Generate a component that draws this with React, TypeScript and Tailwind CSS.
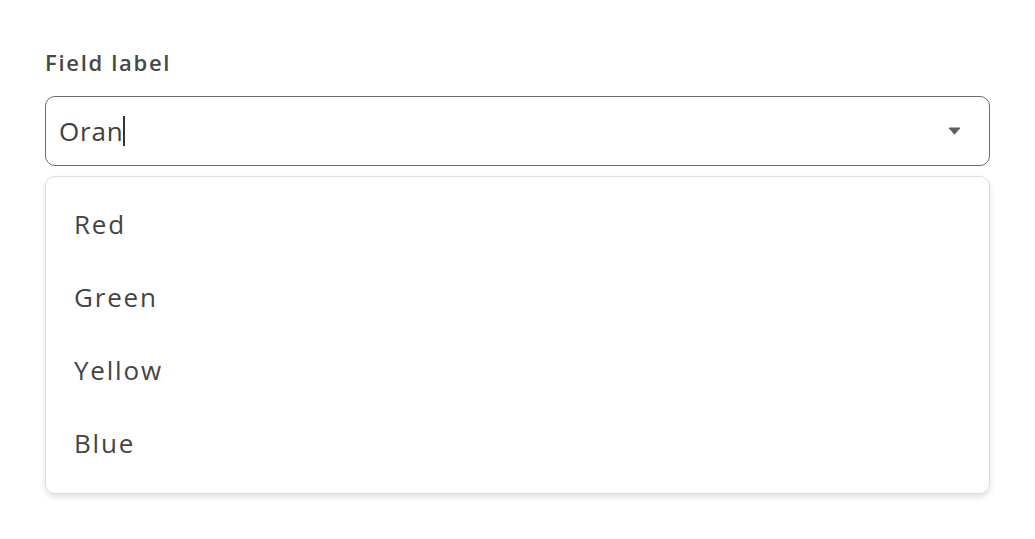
import * as React from "react";

const options = ["Red", "Green", "Yellow", "Blue"];

const App = () => {
  return (
    <div
      className="w-[1035px] h-[539px] bg-white pl-[45px] pr-[45px] pt-[48px] text-[#3d3d3d]"
      style={{ fontFamily: '"Open Sans", "Noto Sans", sans-serif' }}
    >
      <div className="text-[22px] leading-[29px] font-semibold text-[#474747] tracking-[1.7px]">
        Field label
      </div>
      <div className="mt-[19px] h-[70px] rounded-[10px] border-[1.5px] border-[#6b6b6b] flex items-center pl-[13px] pr-[28px]">
        <span className="text-[26px] text-[#3f3f3f] tracking-[0.8px]">Oran</span>
        <span className="w-[2px] h-[30px] bg-[#333]" />
        <div className="flex-1" />
        <svg width="13" height="8" viewBox="0 0 13 8">
          <path d="M1 1.5 Q0.5 0.5 1.8 0.5 H11.2 Q12.5 0.5 12 1.5 L7.2 7 Q6.5 7.8 5.8 7 Z" fill="#5f5f5f" />
        </svg>
      </div>
      <div className="mt-[10px] rounded-[10px] border border-[#dcdcdc] shadow-[0_3px_6px_rgba(0,0,0,0.12)] pt-[11px] pb-[13px]">
        {options.map((o) => (
          <div key={o} className="h-[73px] flex items-center pl-[28px] text-[26px] text-[#444] tracking-[1.8px]">
            {o}
          </div>
        ))}
      </div>
    </div>
  );
};

export default App;
